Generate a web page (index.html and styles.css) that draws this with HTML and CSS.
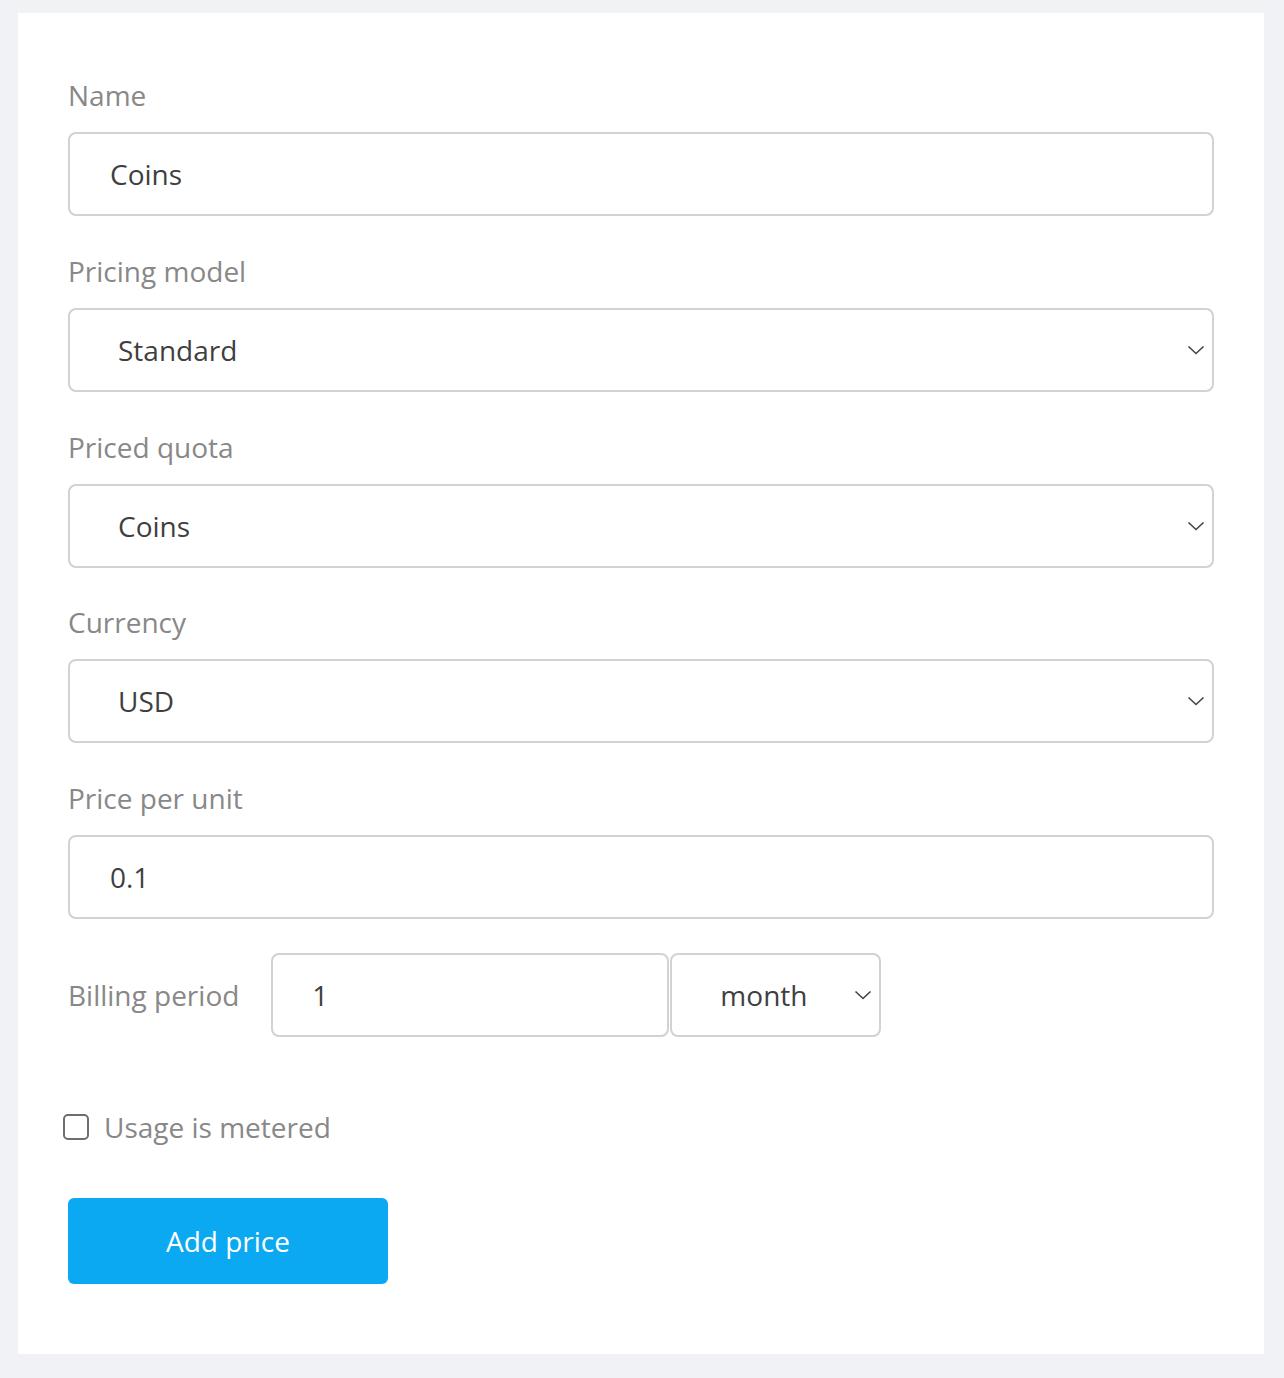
FILE: index.html
```html
<!DOCTYPE html>
<html>
<head>
<meta charset="utf-8">
<link rel="stylesheet" href="styles.css">
</head>
<body>
<div class="card">
  <div class="group">
    <div class="label">Name</div>
    <div class="field input">Coins</div>
  </div>
  <div class="group">
    <div class="label">Pricing model</div>
    <div class="field select"><span>Standard</span><svg class="chev" width="18" height="10" viewBox="0 0 18 10"><path d="M1.5 1.5 L9 8.5 L16.5 1.5" fill="none" stroke="#444" stroke-width="1.6"/></svg></div>
  </div>
  <div class="group">
    <div class="label">Priced quota</div>
    <div class="field select"><span>Coins</span><svg class="chev" width="18" height="10" viewBox="0 0 18 10"><path d="M1.5 1.5 L9 8.5 L16.5 1.5" fill="none" stroke="#444" stroke-width="1.6"/></svg></div>
  </div>
  <div class="group">
    <div class="label">Currency</div>
    <div class="field select"><span>USD</span><svg class="chev" width="18" height="10" viewBox="0 0 18 10"><path d="M1.5 1.5 L9 8.5 L16.5 1.5" fill="none" stroke="#444" stroke-width="1.6"/></svg></div>
  </div>
  <div class="group">
    <div class="label">Price per unit</div>
    <div class="field input">0.1</div>
  </div>
  <div class="billing">
    <div class="label inline">Billing period</div>
    <div class="field input small-input">1</div>
    <div class="field select small-select"><span>month</span><svg class="chev" width="18" height="10" viewBox="0 0 18 10"><path d="M1.5 1.5 L9 8.5 L16.5 1.5" fill="none" stroke="#444" stroke-width="1.6"/></svg></div>
  </div>
  <div class="check-row">
    <span class="checkbox"></span>
    <span class="check-label">Usage is metered</span>
  </div>
  <button class="btn">Add price</button>
</div>
</body>
</html>
```

FILE: styles.css
```css
html, body {
  margin: 0;
  padding: 0;
  background: #f0f2f5;
}
body {
  padding: 13px 20px 24px 18px;
  font-family: "Open Sans", "Noto Sans", sans-serif;
}
.card {
  width: 1246px;
  box-sizing: border-box;
  background: #ffffff;
  padding: 64px 50px 70px 50px;
}
.group {
  margin-bottom: 36.75px;
}
.label {
  font-size: 28px;
  line-height: 36px;
  color: #888888;
  margin-bottom: 19px;
}
.field {
  box-sizing: border-box;
  height: 84px;
  border: 2px solid #d2d2d2;
  border-radius: 8px;
  background: #fff;
  font-size: 28px;
  color: #3f3f3f;
  display: flex;
  align-items: center;
}
.input {
  padding-left: 40px;
}
.select {
  padding-left: 48px;
  padding-right: 7px;
  justify-content: space-between;
}
.chev {
  display: block;
}
.billing {
  display: flex;
  align-items: center;
  margin-top: -3px;
}
.label.inline {
  margin: 0 32px 0 0;
}
.small-input {
  width: 398px;
  padding-left: 39px;
}
.small-select {
  width: 211px;
  margin-left: 1px;
  padding-left: 48px;
  padding-right: 7px;
}
.check-row {
  display: flex;
  align-items: center;
  margin-top: 72px;
  height: 36px;
  margin-left: -5px;
}
.checkbox {
  box-sizing: border-box;
  width: 26px;
  height: 26px;
  border: 2px solid #6e6e6e;
  border-radius: 5px;
  margin-right: 15px;
}
.check-label {
  font-size: 28px;
  color: #888888;
  line-height: 36px;
}
.btn {
  display: block;
  margin-top: 53px;
  width: 320px;
  height: 86px;
  border: none;
  border-radius: 6px;
  background: #0aa9f1;
  color: #ffffff;
  font-family: "Open Sans", "Noto Sans", sans-serif;
  font-size: 28px;
  padding: 0;
}
```
